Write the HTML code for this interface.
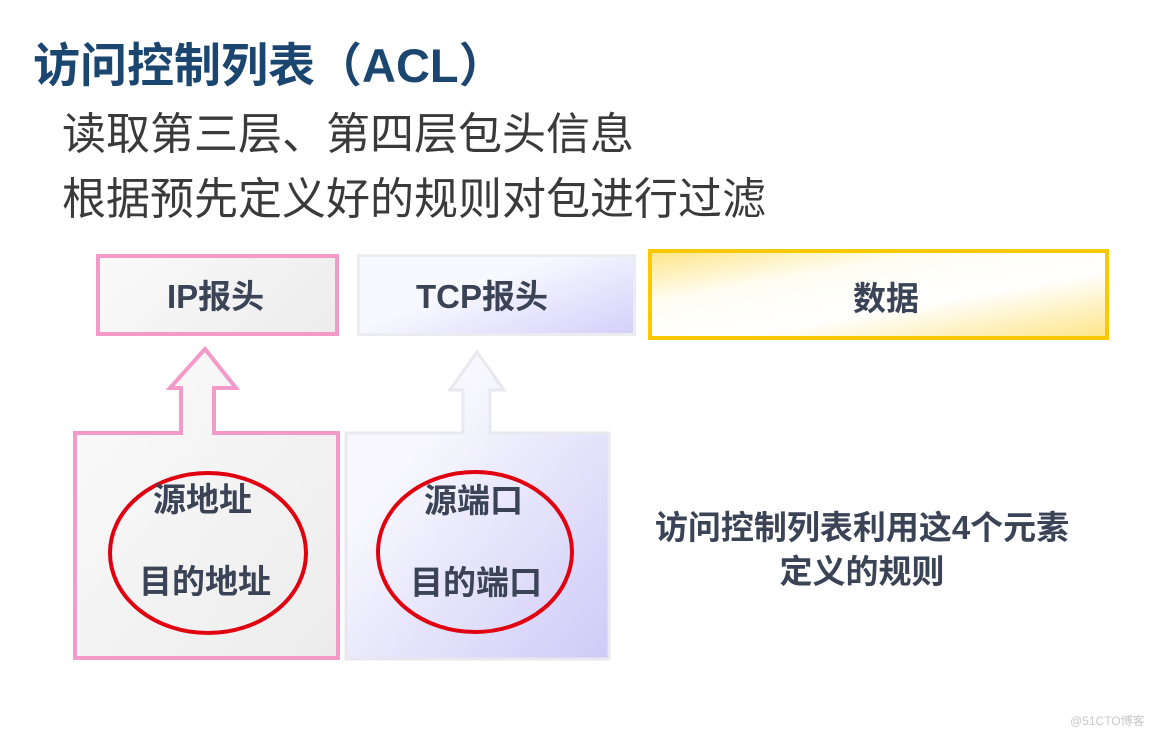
<!DOCTYPE html>
<html><head><meta charset="utf-8"><style>
body{margin:0;width:1169px;height:735px;background:#fff;position:relative;overflow:hidden;font-family:"Liberation Sans","Noto Sans CJK SC",sans-serif}
.t{position:absolute;white-space:nowrap}
.box{position:absolute;box-sizing:border-box}
.lbl{position:absolute;font-weight:bold;color:#3a4456;font-size:33px;line-height:40px;white-space:nowrap}
</style></head><body>
<div class="t" style="left:33px;top:27px;font-size:47px;font-weight:bold;color:#1b4670">访问控制列表（ACL）</div>
<div class="t" style="left:62px;top:98px;font-size:44px;color:#3a3a3a">读取第三层、第四层包头信息</div>
<div class="t" style="left:62px;top:163px;font-size:44px;color:#3a3a3a">根据预先定义好的规则对包进行过滤</div>

<div class="box" style="left:96px;top:254px;width:243px;height:82px;border:4px solid #f49ac8;background:linear-gradient(135deg,#fafafa,#ececec)"></div>
<div class="lbl" style="left:167px;top:277px">IP报头</div>
<div class="box" style="left:357px;top:254px;width:279px;height:82px;border:3px solid #ececf0;background:linear-gradient(160deg,#f8f8ff 40%,#d4d0fa)"></div>
<div class="lbl" style="left:416px;top:277px">TCP报头</div>
<div class="box" style="left:648px;top:249px;width:461px;height:91px;border:4px solid #fcc800;background:linear-gradient(170deg,#fde68a 0%,#fffdf2 30%,#fff 60%,#fde68a 100%)"></div>
<div class="lbl" style="left:853px;top:279px">数据</div>

<svg class="box" style="left:0;top:0" width="1169" height="735">
<defs><linearGradient id="g1" x1="0" y1="0" x2="1" y2="1"><stop offset="0" stop-color="#fbfbfb"/><stop offset="1" stop-color="#ececec"/></linearGradient>
<linearGradient id="g2" x1="0" y1="0" x2="1" y2="1"><stop offset="0.3" stop-color="#f7f7fd"/><stop offset="1" stop-color="#cfcaf8"/></linearGradient></defs>
<path d="M75,433 H181 V388 H170 L205,349 L236,388 H214 V433 H338 V658 H75 Z" fill="url(#g1)" stroke="#f49ac8" stroke-width="4"/>
<path d="M346,433 H463 V390 H450 L477,352 L504,390 H490 V433 H609 V659 H346 Z" fill="url(#g2)" stroke="#e8e8ee" stroke-width="3"/>
<ellipse cx="208" cy="553" rx="98" ry="80" fill="none" stroke="#e0000f" stroke-width="4"/>
<ellipse cx="475" cy="552" rx="97" ry="80" fill="none" stroke="#e0000f" stroke-width="4"/>
</svg>
<div class="lbl" style="left:153px;top:480px">源地址</div>
<div class="lbl" style="left:139px;top:562px">目的地址</div>
<div class="lbl" style="left:424px;top:481px">源端口</div>
<div class="lbl" style="left:410px;top:563px">目的端口</div>
<div class="t" style="left:640px;top:506px;width:444px;text-align:center;font-size:33px;font-weight:bold;color:#3a4456;line-height:44px">访问控制列表利用这4个元素<br>定义的规则</div>
<div class="t" style="left:1070px;top:712px;font-size:12px;color:#c8c8c8">@51CTO博客</div>
</body></html>
